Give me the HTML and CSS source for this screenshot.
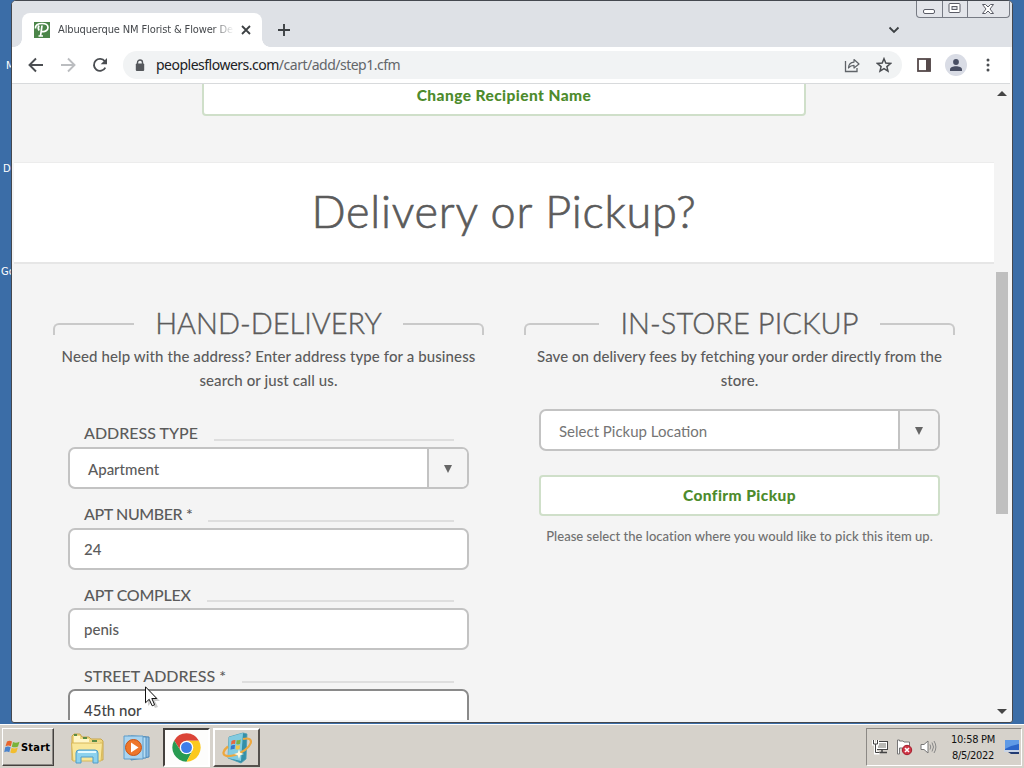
FILE: index.html
```
<!DOCTYPE html>
<html lang="en">
<head>
<meta charset="utf-8">
<title>Albuquerque NM Florist &amp; Flower Delivery</title>
<link rel="stylesheet" href="styles.css">
</head>
<body>
<div class="desktop">
  <span class="desk-label label-a">M</span>
  <span class="desk-label label-b">De</span>
  <span class="desk-label label-c">Go</span>
  <div class="window">
    <header class="tabstrip">
      <div class="tab">
        <svg class="favicon" width="16" height="16" viewBox="0 0 16 16"><rect width="16" height="16" fill="#4b8549"/><path d="M1.500 6.500C1 3 4 1.500 8 1.500c4 0 6 1.500 6 4 0 3-3 4.500-6 4M8 3.500c-.5 4-1 7-1.500 10.500M4.500 14h4.500M5 3.500c-1 2-.8 4 .2 5" fill="none" stroke="#fff" stroke-width="1.700"/></svg>
        <span class="tab-title">Albuquerque NM Florist &amp; Flower De</span>
        <svg class="tab-close" width="10" height="10" viewBox="0 0 10 10"><path d="M1 1l8 8M9 1L1 9" stroke="#3c4043" stroke-width="1.800"/></svg>
      </div>
      <svg class="new-tab" width="12" height="12" viewBox="0 0 12 12"><path d="M6 0v12M0 6h12" stroke="#3c4043" stroke-width="1.900"/></svg>
      <svg class="tab-search" width="12" height="8" viewBox="0 0 12 8"><path d="M1.500 1.500L6 6l4.500-4.500" fill="none" stroke="#3c4043" stroke-width="1.800"/></svg>
      <div class="winbtns">
        <span class="wb"><svg width="14" height="12"><rect x="1.500" y="7.500" width="11" height="4" rx="1.500" fill="#fff" stroke="#5a5c66"/></svg></span>
        <span class="wb"><svg width="13" height="12"><rect x="1" y="1.500" width="11" height="9" rx="1" fill="#fff" stroke="#5a5c66"/><rect x="4" y="4.500" width="5" height="3" fill="#dee1e6" stroke="#5a5c66"/></svg></span>
        <span class="wb wide"><svg width="14" height="12" viewBox="0 0 14 12"><path d="M1.500 1.500h3L7 4l2.500-2.500h3L9 6l3.500 4.500h-3L7 8l-2.500 2.500h-3L5 6z" fill="#fff" stroke="#5a5c66"/></svg></span>
      </div>
    </header>
    <div class="toolbar">
      <svg class="nav" width="16" height="16" viewBox="0 0 16 16"><path d="M15 8H2M8 1.500L1.500 8 8 14.500" fill="none" stroke="#4b4e52" stroke-width="1.900"/></svg>
      <svg class="nav" width="16" height="16" viewBox="0 0 16 16"><path d="M1 8h13M8 1.500L14.500 8 8 14.500" fill="none" stroke="#bbbdc0" stroke-width="1.900"/></svg>
      <svg class="nav" width="16" height="16" viewBox="0 0 16 16"><path d="M13.300 10.600A6 6 0 1 1 12.800 4.300" fill="none" stroke="#4b4e52" stroke-width="1.900"/><path d="M15 1v6.300H8.700z" fill="#4b4e52"/></svg>
      <div class="omnibox">
        <svg width="10" height="13" viewBox="0 0 10 13"><path d="M2.500 5V3.500a2.500 2.500 0 0 1 5 0V5" fill="none" stroke="#55585c" stroke-width="1.400"/><rect x=".8" y="4.600" width="8.400" height="7.400" rx="1" fill="#55585c"/></svg>
        <span class="url">peoplesflowers.com<span class="path">/cart/add/step1.cfm</span></span>
        <svg class="share" width="16" height="16" viewBox="0 0 16 16"><path d="M1.500 4v10.500h11.500V11" fill="none" stroke="#5f6368" stroke-width="1.300"/><path d="M4.500 11c.2-4 2.300-5.700 5.500-5.900V2.500L15 7l-5 4V8.300C7.500 8.300 6 9 4.500 11z" fill="none" stroke="#5f6368" stroke-width="1.200" stroke-linejoin="round"/></svg>
        <svg class="star" width="16" height="16" viewBox="0 0 16 16"><path d="M8 1.700l1.800 4.400 4.700.4-3.600 3.100 1.100 4.600L8 11.700l-4 2.500 1.100-4.600L1.500 6.500l4.700-.4z" fill="none" stroke="#4b4e52" stroke-width="1.500"/></svg>
      </div>
      <svg class="panel-icon" width="14" height="14" viewBox="0 0 14 14"><rect x="1" y="1" width="12" height="12" fill="#fff" stroke="#55494a" stroke-width="1.800"/><rect x="9" y="1" width="4.500" height="12" fill="#55494a"/></svg>
      <span class="avatar"><svg width="12" height="12" viewBox="0 0 12 12"><circle cx="6" cy="3" r="2.900" fill="#484e62"/><path d="M0 12v-1.500C0 8.300 3 7.200 6 7.200s6 1.100 6 3.300V12z" fill="#484e62"/></svg></span>
      <svg class="menu" width="4" height="14" viewBox="0 0 4 14"><g fill="#4b4e52"><circle cx="2" cy="2" r="1.500"/><circle cx="2" cy="7" r="1.500"/><circle cx="2" cy="12" r="1.500"/></g></svg>
    </div>
    <div class="viewport">
      <main class="page">
        <div class="recipient"><div class="button change">Change Recipient Name</div></div>
        <h1 class="banner">Delivery or Pickup?</h1>
        <div class="columns">
          <section class="column">
            <h2 class="heading hand"><i class="rule left"></i><span>HAND-DELIVERY</span><i class="rule right"></i></h2>
            <p class="intro help">Need help with the address? Enter address type for a business<br><span class="second">search or just call us.</span></p>
            <div class="form">
              <div class="label"><span>ADDRESS TYPE</span><i></i></div>
              <div class="field select"><span>Apartment</span><b class="arrow"></b></div>
              <div class="label apt"><span>APT NUMBER *</span><i></i></div>
              <div class="field">24</div>
              <div class="label complex"><span>APT COMPLEX</span><i></i></div>
              <div class="field">penis</div>
              <div class="label street"><span>STREET ADDRESS *</span><i></i></div>
              <div class="field focused">45th nor</div>
            </div>
          </section>
          <section class="column">
            <h2 class="heading store"><i class="rule left"></i><span>IN-STORE PICKUP</span><i class="rule right"></i></h2>
            <p class="intro save">Save on delivery fees by fetching your order directly from the<br>store.</p>
            <div class="pickup">
              <div class="field select placeholder"><span>Select Pickup Location</span><b class="arrow"></b></div>
              <div class="button confirm">Confirm Pickup</div>
              <p class="hint">Please select the location where you would like to pick this item up.</p>
            </div>
          </section>
        </div>
      </main>
      <div class="scrollbar">
        <svg width="10" height="5"><path d="M0 5l5-5 5 5z" fill="#454545"/></svg>
        <div class="thumb"></div>
        <svg class="down" width="10" height="5"><path d="M0 0l5 5 5-5z" fill="#454545"/></svg>
      </div>
    </div>
  </div>
</div>
<footer class="taskbar">
  <div class="start">
    <svg width="17" height="16" viewBox="0 0 17 16"><path d="M3 2.500c2-1.200 3.500-1 5 0L6.800 7.300C5 6.300 3.500 6.400 1.500 7.300z" fill="#e8642c"/><path d="M9 3c2 1 4 1 6.500-.3L14 7.500c-2 1-4 1.200-6.200.2z" fill="#79b33a"/><path d="M1.200 8.300c2-1 3.600-1 5.400 0l-1.300 4.900c-1.600-1-3.300-1-5.100 0z" fill="#4a83cc"/><path d="M7.600 8.700c2 1 4 .9 6.200-.2l-1.400 4.800c-2 1.200-4 1.300-6.100.3z" fill="#f2bd2e"/></svg>
    <span>Start</span>
  </div>
  <svg class="explorer" width="34" height="32" viewBox="0 0 34 32">
    <path d="M2 28V4l2-2h6l2 3h7l2 2h10l2 2v19z" fill="#f0d77e" stroke="#c9a64a"/><path d="M4 9V4h6v3h9v3h11v4H4z" fill="#fff6c9"/><path d="M4 3h3M13 6h4M22 9h5" stroke="#5a8b45" stroke-width="2"/><path d="M1.500 11h31l-1.500 18H3z" fill="#f9e79a" stroke="#d7b85a"/>
    <path d="M6 31V21q0-3 3-3h16q3 0 3 3v10h-5v-6H11v6z" fill="#8dd2ee" stroke="#4f9cc9"/><path d="M8 20h18" stroke="#e4faff" stroke-width="2"/>
  </svg>
  <svg class="player" width="28" height="27" viewBox="0 0 28 27">
    <path d="M8 2l18 1v20l-18 3z" fill="#8bbce4" stroke="#4a85b5"/><path d="M5 2l18 1v21H5z" fill="#b7dcf3" stroke="#5590bd"/><path d="M1 2h19v23H1z" fill="#a9d4f0" stroke="#5c9cca"/><circle cx="10.500" cy="13.500" r="8" fill="#ee762a" stroke="#c65418"/><path d="M8 8.500v10l7.500-5z" fill="#fff"/>
  </svg>
  <div class="task active">
    <svg width="31" height="31" viewBox="0 0 48 48"><path d="M24 13.500H43.300A22 22 0 0 0 4.950 13L14.900 29.200 24 24z" fill="#db4437"/><path d="M14.900 29.200L4.950 13A22 22 0 0 0 24 46l9.100-16.800L24 24z" fill="#289b52"/><path d="M33.100 29.200L24 46A22 22 0 0 0 43.300 13.500H24V24z" fill="#fbc91e"/><circle cx="24" cy="24" r="10.500" fill="#fff"/><circle cx="24" cy="24" r="8.500" fill="#3f7de8"/></svg>
  </div>
  <div class="task raised">
    <svg width="30" height="32" viewBox="0 0 30 32"><path d="M7 5l14-4 4 1-1 25-5 4-13-5z" fill="#348fa8" stroke="#4a9db4" stroke-width=".8"/><path d="M7 5l14-4-2 28-13-3z" fill="#83cbe0"/><path d="M9.500 9q2-1.500 4-1L13 12q-2-.5-4 .7z" fill="#e9663d"/><path d="M14.700 8q2 .8 4-.5l-.5 4.300q-2 1-4 .3z" fill="#7cb342"/><path d="M9 13.800q2-1.200 4-.7l-.5 4q-2-.5-4 .7z" fill="#3678ca"/><path d="M14 13.200q2 .8 4-.3l-.4 4q-2 1.100-4 .3z" fill="#f2c746"/><path d="M21 7c6-1.500 9 .5 7.500 4.500C27 16 20 21 13 23 6 25 1 24 1.500 20.500 2 18 4 16 6 14.500" fill="none" stroke="#eda83f" stroke-width="2.200"/><path d="M17 17l1.200 3.800L22 22l-3.800 1.200L17 27l-1.200-3.800L12 22l3.800-1.200z" fill="#fff8df"/></svg>
  </div>
  <div class="tray">
    <svg class="net" width="17" height="16" viewBox="0 0 17 16"><rect x="4.500" y="2.500" width="11" height="8" fill="#b8b8b4" stroke="#444"/><rect x="5.500" y="3.500" width="9" height="6" fill="none" stroke="#fff"/><path d="M7 13.500h8M10 11v2" stroke="#444" stroke-width="1.500"/><path d="M1.500 1v4h4V1M3.500 5v9h4" fill="none" stroke="#fff" stroke-width="3"/><path d="M1.500 1v4h4V1M3.500 5v8.500h4" fill="none" stroke="#444"/></svg>
    <svg class="flag" width="17" height="17" viewBox="0 0 17 17"><path d="M1.500 1v14h2V9h3l1 1h6V3H8L7 2H3.500V1z" fill="#fff" stroke="#777"/><circle cx="11" cy="11" r="4.700" fill="#cf3545" stroke="#a4202e"/><path d="M9 9l4 4M13 9l-4 4" stroke="#fff" stroke-width="1.600"/></svg>
    <svg class="sound" width="17" height="16" viewBox="0 0 17 16"><path d="M1 5.500h3L8 2v12l-4-3.500H1z" fill="#fff" stroke="#777"/><path d="M10 5.500q1.500 2.500 0 5M12 3.500q3 4.500 0 9M14 2q3.800 6 0 12" fill="none" stroke="#888"/></svg>
    <div class="clock"><span class="time">10:58 PM</span><span class="date">8/5/2022</span></div>
    <svg class="show" width="15" height="14" viewBox="0 0 15 14"><path d="M1 0h14v10H1z" fill="#2b65c9"/><path d="M1 0h14v4q-8 1-14 5z" fill="#5f9ae6"/><path d="M0 10h15v2H0z" fill="#c8d4e6"/><path d="M4 12h11v2H7z" fill="#233c73"/></svg>
  </div>
</footer>
<svg class="cursor" width="16" height="24" viewBox="0 0 16 24"><path d="M3 3v17l4-4 3 6 3-1-3-6h5z" fill="#0003"/><path d="M.5.8v16l3.700-3.500 3 6.500 2.400-1.100-2.800-6.200h5z" fill="#fff" stroke="#111"/></svg>
</body>
</html>
```
FILE: styles.css
```
* { box-sizing: border-box; }
body { margin: 0; width: 1024px; height: 768px; overflow: hidden; display: flex; flex-direction: column; font-family: Lato, sans-serif; color: #5b5b5b; }
svg { display: block; flex: none; }
h1, h2, p { margin: 0; font-weight: 400; }
i, b { font-style: normal; }

.desktop { position: relative; height: 724px; background: #3b6da7; overflow: hidden; flex: none; }
.desk-label { position: absolute; color: #fff; font: 11px/14px "DejaVu Sans Condensed", sans-serif; }
.label-a { left: 6px; top: 59px; }
.label-b { left: 3px; top: 162px; }
.label-c { left: 1px; top: 265px; }

.window { position: relative; margin-left: 11px; width: 1002px; height: 723px; border: 1px solid #44484f; border-radius: 5px 5px 3px 3px; background: #f3f4f5; display: flex; flex-direction: column; overflow: hidden; }
.tabstrip { height: 46px; flex: none; background: #dee1e6; display: flex; align-items: flex-start; padding-left: 10px; }
.tab { position: relative; width: 240px; height: 34px; margin-top: 12px; background: #fff; border-radius: 8px 8px 0 0; display: flex; align-items: center; padding: 0 11px 0 12px; }
.tab::before, .tab::after { content: ""; position: absolute; bottom: 0; width: 8px; height: 8px; }
.tab::before { left: -8px; background: radial-gradient(circle at 0 0, #dee1e6 7.5px, #fff 8px); }
.tab::after { right: -8px; background: radial-gradient(circle at 100% 0, #dee1e6 7.5px, #fff 8px); }
.tab-title { width: 176px; margin-left: 8px; margin-right: 7px; white-space: nowrap; font: 11px/16px "DejaVu Sans Condensed", sans-serif; letter-spacing: -.13px; color: #45484c; -webkit-mask-image: linear-gradient(90deg, #000 155px, transparent 176px); mask-image: linear-gradient(90deg, #000 155px, transparent 176px); }
.new-tab { margin: 23px 0 0 16px; }
.tab-search { margin: 25px 0 0 598px; }
.winbtns { display: flex; margin-left: 16px; height: 17px; border: 1px solid #777b84; border-top: 0; border-radius: 0 0 4px 4px; background: #e3e5ea; }
.wb { width: 25px; display: flex; justify-content: center; padding: 1px 1px 0 0; }
.wb + .wb { border-left: 1px solid #777b84; }
.wb.wide { width: 42px; padding-right: 2px; }
.wb.wide svg { margin-top: 1px; }

.toolbar { height: 37px; flex: none; background: #fff; border-bottom: 1px solid #d8dadc; margin-right: 2px; display: flex; align-items: center; padding-left: 16px; }
.nav { margin-right: 16px; }
.omnibox { width: 779px; height: 28px; margin-left: -1px; border-radius: 14px; background: #f1f3f4; display: flex; align-items: center; padding-left: 12px; }
.url { width: 688px; margin-left: 11px; font: 14px/20px "Noto Sans", sans-serif; letter-spacing: -.5px; color: #202124; white-space: nowrap; }
.path { color: #63666a; }
.share { width: 16px; }
.star { margin-left: 16px; }
.panel-icon { margin-left: 15px; }
.avatar { width: 22px; height: 22px; margin-left: 14px; border-radius: 50%; background: #d9dce5; display: flex; align-items: center; justify-content: center; flex: none; }
.menu { margin-left: 19px; }

.viewport { height: 636px; flex: none; display: flex; margin: 0 2px; background: #f4f4f4; overflow: hidden; }
.page { width: 980px; flex: none; }
.recipient { height: 79px; border-bottom: 1px solid #ececec; display: flex; justify-content: center; }
.button { height: 42px; border: 2px solid #cfdfc9; border-radius: 4px; background: #fff; color: #4d8b2c; font: 900 15.5px/38px Lato, sans-serif; letter-spacing: .42px; text-align: center; }
.change { width: 604px; margin-top: -10px; }
.banner { height: 101px; background: #fff; border-bottom: 2px solid #e6e6e6; text-align: center; font-size: 45px; font-weight: 300; line-height: 97px; letter-spacing: .75px; -webkit-text-stroke: .7px #5b5b5b; }
.columns { display: flex; gap: 40px; padding: 42px 39px 0; }
.column { width: 431px; flex: none; }
.heading { height: 36px; display: flex; justify-content: space-between; font-size: 29px; font-weight: 300; line-height: 34px; white-space: nowrap; -webkit-text-stroke: .4px #5b5b5b; }
.rule { width: 81px; height: 12px; margin-top: 17px; border-top: 2px solid #c9c9c9; }
.store .rule { width: 75px; }
.store { letter-spacing: .1px; }
.rule.left { border-left: 2px solid #c9c9c9; border-top-left-radius: 6px; }
.rule.right { border-right: 2px solid #c9c9c9; border-top-right-radius: 6px; }
.intro { margin-top: 2px; text-align: center; font-size: 15px; font-weight: 500; line-height: 24px; white-space: nowrap; }
.help { letter-spacing: .1px; }
.save { letter-spacing: .06px; }
.form { width: 401px; margin: 30px 15px 0; }
.label { height: 25px; padding: 0 15px 0 16px; display: flex; gap: 16px; font-size: 16px; font-weight: 500; line-height: 22px; white-space: nowrap; }
.label i { flex: 1; height: 2px; margin-top: 17px; background: #dedede; }
.apt { letter-spacing: -.4px; }
.complex { letter-spacing: -.25px; margin-top: -1px; line-height: 24px; }
.street { line-height: 24px; }
.field { height: 42px; margin-bottom: 14px; border: 2px solid #c3c3c3; border-radius: 7px; background: #fff; padding-left: 14px; font-size: 15px; font-weight: 500; line-height: 38px; white-space: nowrap; overflow: hidden; }
.focused { border-color: #8a8a8a; color: #444; line-height: 38px; }
.select { display: flex; justify-content: space-between; padding-left: 18px; line-height: 41px; }
.arrow { width: 40px; border-left: 2px solid #c3c3c3; background: #f4f4f4; display: flex; align-items: center; justify-content: center; }
.arrow::before { content: ""; border: 4.5px solid transparent; border-top: 8px solid #666; border-bottom: 0; margin-top: 2px; }
.pickup { width: 401px; margin: 17px 15px 0; }
.placeholder { margin-bottom: 24px; color: #757575; font-weight: 400; line-height: 41px; }
.confirm { height: 41px; line-height: 36px; }
.hint { margin-top: 10px; text-align: center; font-size: 13px; font-weight: 500; line-height: 20px; color: #707070; white-space: nowrap; letter-spacing: .03px; }

.scrollbar { width: 16px; display: flex; flex-direction: column; align-items: center; padding-top: 7px; }
.thumb { width: 12px; height: 242px; margin-top: 176px; background: #bfbfbf; }
.down { margin-top: 195px; }

.taskbar { height: 44px; flex: none; background: #d6d2cb; border-top: 1px solid #fff; display: flex; align-items: flex-start; padding: 3px 0 0 2px; }
.start { width: 52px; height: 38px; border: 1px solid; border-color: #fff #44413e #44413e #fff; box-shadow: inset -1px -1px #8c8985; display: flex; align-items: center; padding-left: 1px; color: #000; font: bold 11px/16px "DejaVu Sans Condensed", sans-serif; }
.start span { letter-spacing: .2px; padding-top: 1px; }
.explorer { margin: 4px 0 0 16px; }
.player { margin: 6px 0 0 19px; }
.task { width: 47px; height: 39px; border: 2px solid; display: flex; align-items: center; justify-content: center; }
.active { margin-left: 12px; border-color: #44413e #fff #fff #44413e; background: #fdfdfc; }
.raised { margin-left: 3px; border-color: #fff #55514d #55514d #fff; }
.tray { width: 156px; height: 38px; margin: 0 0 0 606px; border: 1px solid; border-color: #8c8985 #fff #fff #8c8985; display: flex; align-items: center; padding-left: 5px; }
.flag { margin-left: 7px; }
.sound { margin-left: 7px; }
.clock { width: 48px; margin-left: 12px; padding-top: 1px; display: flex; flex-direction: column; align-items: center; color: #111; font: 11px/16px "DejaVu Sans Condensed", sans-serif; white-space: nowrap; letter-spacing: -.3px; }
.show { margin-left: 7px; }
.cursor { position: absolute; left: 145px; top: 686px; }
```
